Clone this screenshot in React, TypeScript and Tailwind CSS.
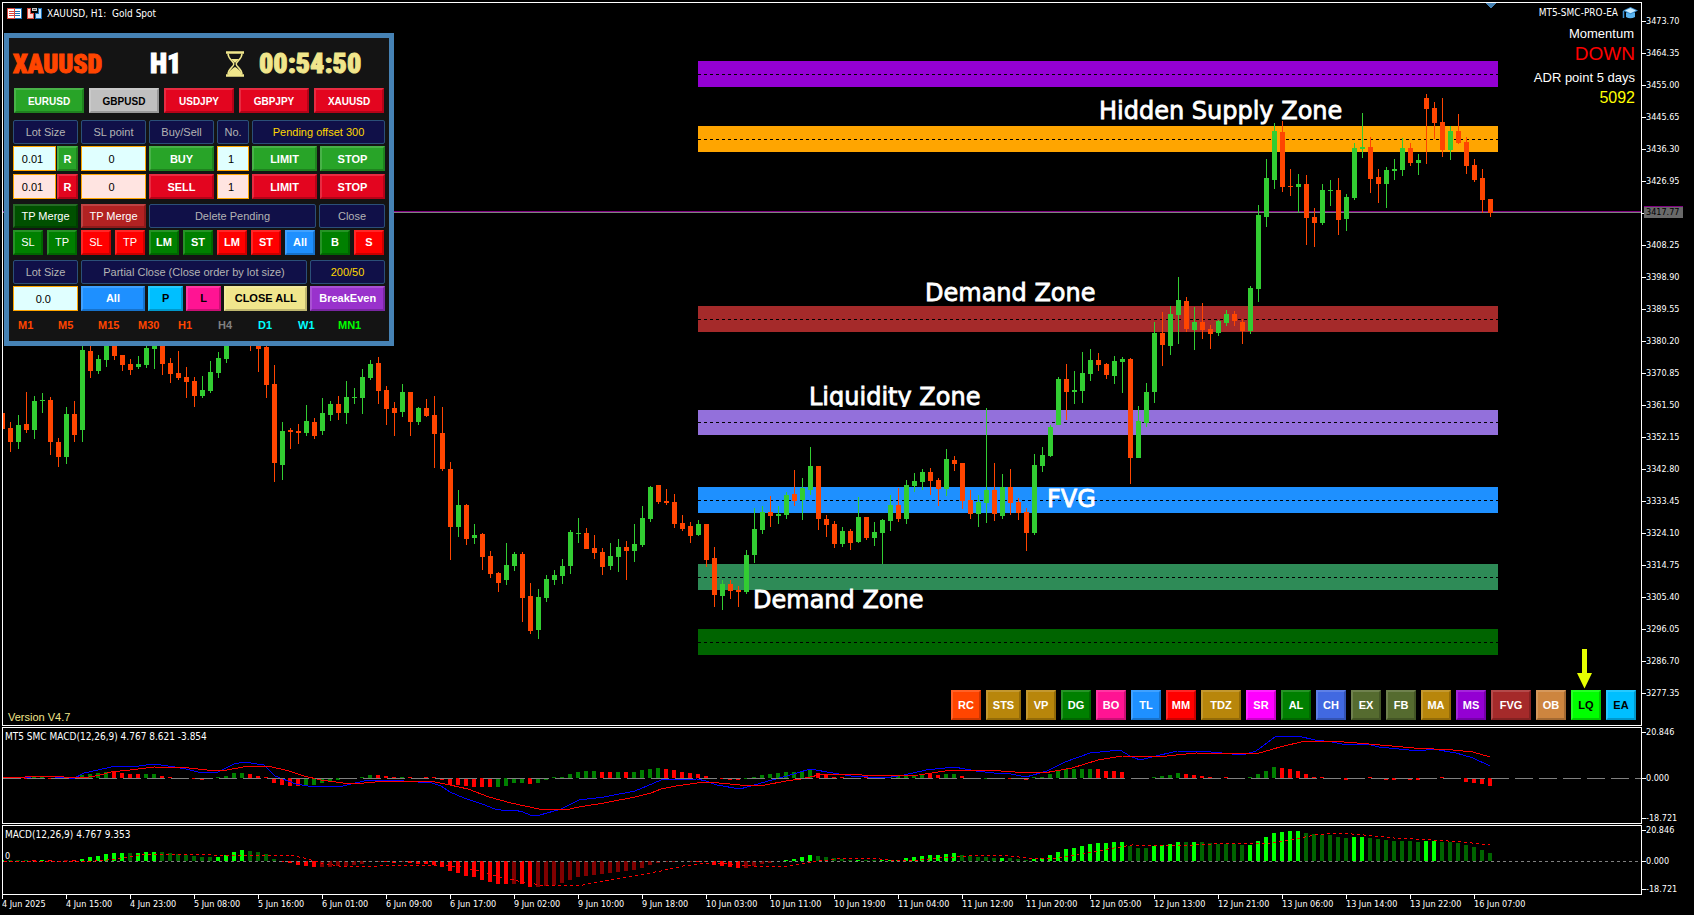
import { ReactNode } from "react";

// one candle per 8px column: [high, body top, body bottom, low, up?]
type Candle = [number, number, number, number, 0 | 1];

const CANDLES: Candle[] = [
  [413, 413, 429, 429, 0], [422, 428, 442, 452, 0], [415, 425, 442, 449, 1], [392, 424, 430, 433, 0],
  [396, 401, 430, 439, 1], [393, 400, 401, 413, 1], [397, 400, 442, 455, 0], [438, 442, 457, 467, 0],
  [407, 414, 457, 464, 1], [401, 414, 435, 442, 0], [340, 350, 430, 442, 1], [340, 351, 371, 378, 0],
  [355, 359, 371, 374, 1], [340, 340, 360, 367, 1], [340, 340, 356, 360, 0], [355, 355, 365, 371, 0],
  [359, 364, 370, 375, 0], [356, 364, 367, 369, 1], [345, 348, 365, 368, 1], [340, 340, 349, 369, 1],
  [340, 340, 364, 375, 0], [358, 363, 374, 383, 0], [351, 373, 378, 380, 0], [367, 377, 382, 398, 0],
  [377, 381, 396, 407, 0], [376, 390, 396, 398, 1], [361, 372, 391, 393, 1], [352, 358, 373, 378, 1],
  [340, 340, 359, 363, 1], [330, 332, 338, 340, 1], [330, 334, 340, 342, 0], [330, 334, 340, 351, 0],
  [340, 340, 349, 372, 0], [340, 347, 385, 398, 0], [365, 384, 463, 482, 0], [422, 431, 465, 480, 1],
  [428, 430, 432, 449, 0], [424, 431, 433, 444, 0], [405, 421, 433, 436, 1], [418, 422, 436, 439, 0],
  [398, 413, 431, 435, 1], [401, 404, 415, 421, 1], [396, 404, 413, 420, 0], [381, 397, 413, 424, 1],
  [388, 397, 398, 404, 1], [369, 377, 398, 414, 1], [360, 364, 378, 380, 1], [357, 363, 391, 404, 0],
  [386, 390, 409, 425, 0], [402, 408, 413, 436, 0], [384, 392, 412, 417, 1], [392, 392, 422, 436, 0],
  [407, 408, 422, 425, 1], [399, 408, 416, 417, 0], [396, 415, 434, 468, 0], [407, 433, 469, 471, 0],
  [462, 469, 527, 560, 0], [490, 505, 527, 537, 1], [504, 505, 539, 545, 0], [524, 535, 538, 544, 1],
  [533, 534, 557, 570, 0], [551, 556, 574, 578, 0], [572, 573, 583, 592, 0], [543, 565, 580, 585, 1],
  [552, 554, 566, 571, 1], [552, 554, 598, 622, 0], [583, 596, 631, 634, 0], [589, 597, 630, 639, 1],
  [575, 579, 598, 602, 1], [570, 575, 580, 585, 1], [559, 566, 576, 584, 1], [530, 532, 566, 574, 1],
  [518, 533, 534, 543, 1], [528, 533, 549, 549, 0], [535, 548, 553, 559, 0], [548, 552, 567, 575, 0],
  [543, 556, 566, 570, 1], [539, 547, 557, 572, 1], [541, 547, 551, 580, 0], [524, 544, 551, 562, 1],
  [506, 518, 545, 547, 1], [486, 487, 519, 522, 1], [485, 485, 502, 504, 0], [489, 501, 503, 505, 0],
  [494, 502, 524, 528, 0], [515, 523, 529, 531, 0], [522, 526, 536, 543, 0], [520, 524, 535, 536, 1],
  [524, 524, 560, 567, 0], [547, 558, 595, 607, 0], [580, 584, 596, 610, 1], [580, 584, 591, 599, 0],
  [586, 590, 592, 607, 0], [550, 555, 592, 594, 1], [508, 529, 555, 563, 1], [506, 512, 530, 534, 1],
  [496, 512, 516, 527, 0], [506, 514, 516, 524, 1], [492, 495, 515, 519, 1], [470, 494, 501, 506, 0],
  [478, 488, 500, 520, 1], [447, 466, 490, 495, 1], [466, 466, 519, 530, 0], [515, 519, 525, 537, 0],
  [521, 524, 544, 548, 0], [527, 531, 544, 547, 1], [529, 531, 543, 550, 0], [497, 517, 542, 543, 1],
  [517, 517, 538, 540, 0], [522, 532, 538, 546, 1], [519, 520, 533, 564, 1], [495, 505, 521, 531, 1],
  [488, 505, 519, 522, 0], [480, 485, 519, 524, 1], [473, 481, 486, 492, 1], [469, 472, 482, 490, 1],
  [468, 472, 481, 495, 0], [478, 480, 489, 506, 0], [449, 459, 489, 496, 1], [456, 460, 464, 471, 0],
  [463, 463, 501, 509, 0], [490, 500, 514, 519, 0], [495, 502, 514, 527, 1], [408, 490, 503, 523, 1],
  [463, 490, 514, 521, 0], [474, 487, 516, 519, 1], [469, 487, 503, 515, 0], [498, 502, 513, 520, 0],
  [508, 512, 533, 551, 0], [454, 465, 533, 535, 1], [447, 455, 466, 472, 1], [425, 427, 456, 457, 1],
  [377, 379, 425, 425, 1], [364, 379, 392, 420, 0], [371, 390, 392, 404, 1], [352, 373, 391, 403, 1],
  [349, 360, 374, 381, 1], [353, 360, 365, 371, 0], [363, 364, 375, 379, 0], [356, 361, 376, 384, 1],
  [357, 359, 362, 393, 1], [358, 359, 458, 484, 0], [406, 421, 458, 458, 1], [383, 392, 423, 427, 1],
  [322, 333, 392, 403, 1], [312, 333, 345, 366, 0], [306, 314, 346, 355, 1], [277, 300, 315, 344, 1],
  [297, 301, 329, 332, 0], [307, 322, 330, 350, 1], [303, 322, 330, 339, 0], [325, 329, 334, 349, 0],
  [320, 321, 333, 336, 1], [310, 314, 323, 326, 1], [311, 314, 321, 326, 0], [319, 322, 331, 344, 0],
  [286, 288, 331, 334, 1], [205, 215, 289, 302, 1], [159, 178, 217, 227, 1], [123, 131, 180, 189, 1],
  [121, 132, 187, 192, 0], [169, 186, 187, 196, 0], [174, 184, 187, 213, 1], [175, 184, 218, 245, 0],
  [208, 217, 223, 247, 0], [184, 190, 223, 225, 1], [180, 190, 191, 206, 1], [178, 190, 220, 235, 0],
  [194, 197, 219, 231, 1], [143, 148, 198, 200, 1], [113, 147, 149, 158, 1], [137, 147, 179, 193, 0],
  [169, 177, 184, 203, 0], [167, 170, 184, 208, 1], [159, 169, 171, 180, 1], [138, 148, 170, 176, 1],
  [143, 148, 163, 166, 0], [154, 160, 163, 175, 1], [94, 98, 109, 164, 0], [102, 108, 123, 139, 0],
  [98, 122, 150, 157, 0], [126, 131, 150, 160, 1], [114, 131, 143, 144, 0], [137, 142, 166, 174, 0],
  [159, 165, 180, 182, 0], [169, 178, 200, 213, 0], [199, 199, 213, 217, 0],
];

const ZONES = [
  { y: 61, h: 26, mid: 74, color: "#9400d3" },
  { y: 126, h: 26, mid: 139, color: "#ffa500" },
  { y: 306, h: 26, mid: 319, color: "#a52a2a" },
  { y: 410, h: 25, mid: 422, color: "#9370db" },
  { y: 487, h: 26, mid: 500, color: "#1e90ff" },
  { y: 564, h: 26, mid: 577, color: "#2e8b57" },
  { y: 629, h: 26, mid: 642, color: "#006400" },
];

const ZONE_LABELS = [
  { x: 1099, y: 119, text: "Hidden Supply Zone" },
  { x: 925, y: 301, text: "Demand Zone" },
  { x: 809, y: 405, text: "Liquidity Zone" },
  { x: 1047, y: 507, text: "FVG" },
  { x: 753, y: 608, text: "Demand Zone" },
];

// histogram bars: signed height plus colour key, one per column
const HIST =
  "1r 1g -1r -1r 1g 1g -1r -1r -1r -1r 3g 4g 5g 6g 6r 5r 4r 4r 4g 4g 2r 1r 0g 0g -1r -2r -1g 1g 2g 5g 5g 4r 2r 1r -5r -7r -8r -8r -7g -7g -5g -3g -2g -1g 0g 1g 3g 3r 2r 1r 1g 1r 0g 1r 1r -2r -7r -7r -8r -9r -9r -9r -9g -8g -5g -5g -6r -5g -2g 1g 1g 4g 6g 7g 7g 6r 6r 6g 6r 6g 8g 9g 10g 9r 8r 6r 5r 4r 2r 0g -1r -2r -2r -1g 1g 3g 4g 5g 6g 6g 7g 8g 5r 4r 1r 1r 0g 0g 1r 0g 1r 1g 2g 3g 3g 4g 5r 3r 4g 4g 2r 0g 0g -1g -1r 0g -1r -1r -2r 1g 1g 4g 7g 9g 9g 9g 9g 9r 7r 7r 6r 0r -1r -1g 1g 2g 3g 5g 4r 3r 2r 1r 0g 1r 0g 0g 1g 4g 7g 11g 10r 9r 7r 4r 1r 1r 0g -1r -2r 0g 0g 1r -1r -2r -2r -1g -2r -2r 0g 0g 1r -1r -1r -4r -5r -6r -8r";

const MACD_BARS =
  "1l 1d 1d 1d 1r 1l 1r 0d 1m 1r 2l 4l 5l 7l 8l 8l 8d 8l 9l 9l 9d 8d 7d 6d 5d 4d 4d 4l 6l 9l 11l 10d 9d 7d 2d -1r -2r -4r -5r -6r -6m -6m -5m -5m -4m -3m -1m -1m -1r -2r -1m -2r -3r -3r -4r -6r -10r -12r -15r -16r -19r -21r -23r -23r -23m -23r -26r -26m -25m -24m -22m -19m -16m -15m -14m -13m -12m -11m -10m -9m -7m -4m -2m -1m -1m 0m -1m -1r -1r -4r -5r -6r -7r -7m -5m -3m -2m 0m 1l 2l 4l 6l 5d 4d 3d 2d 1d 1l 1d 1d 1l 1l 1l 3l 4l 5l 6l 6l 7l 8l 6d 5d 4d 4d 3d 3l 3d 2d 1d 2l 3l 6l 9l 12l 13l 15l 17l 18l 18l 19l 19l 15d 13d 13d 15l 16l 17l 19l 19d 19l 19d 18d 17d 17d 17d 16d 16l 20l 24l 28l 29l 30l 30l 28d 27d 26d 26d 24d 23d 24l 24l 23d 22d 21d 20d 20d 20d 19d 20l 20l 19d 19d 18d 16d 14d 11d 8d";

const BAR_COLORS: Record<string, string> = {
  r: "#ff0000",
  g: "#008000",
  l: "#00ff00",
  d: "#006400",
  m: "#800000",
};

const MACD_LINE =
  "3,777 21,778 41,776 55,777 73,779 84,773 98,770 111,767 139,766 154,764 175,767 186,769 198,772 218,772 234,764 244,762 264,765 275,776 296,784 314,787 343,786 364,781 379,780 404,781 432,783 441,786 450,792 464,798 482,804 495,809 507,811 514,810 523,812 530,815 540,815 561,809 579,800 604,797 635,791 647,786 661,780 697,779 706,781 717,785 740,789 754,785 772,780 794,774 810,769 833,773 851,776 885,778 904,775 926,770 954,767 976,771 994,773 1011,774 1026,777 1047,771 1065,762 1090,753 1120,750 1130,756 1140,760 1152,757 1177,751 1211,752 1243,755 1256,751 1275,737 1298,736 1315,740 1332,742 1347,745 1367,744 1379,747 1419,751 1433,749 1456,753 1473,758 1490,766";

const SIGNAL_LINE =
  "3,777 25,777 43,776 84,778 100,775 111,772 130,770 154,767 189,768 207,770 227,770 243,767 268,766 289,771 304,776 321,780 343,783 364,783 386,781 430,781 450,785 468,789 489,797 511,803 539,809 565,810 579,807 604,803 635,797 651,793 661,789 676,786 704,782 719,783 740,785 765,785 786,781 801,779 819,775 840,774 883,776 919,775 951,770 986,770 1015,772 1044,773 1072,768 1098,760 1122,756 1157,757 1196,753 1256,754 1280,747 1305,741 1332,741 1369,744 1414,748 1453,750 1473,752 1490,757";

const SIGNAL_DOTS =
  "4,861 36,861 95,861 107,860 123,858 141,855 161,854 193,854 214,855 250,855 289,855 304,858 321,863 339,866 361,867 393,865 443,865 461,867 479,871 500,877 518,881 540,885 561,886 583,885 604,881 633,876 661,871 683,866 708,863 729,864 754,866 790,866 811,862 836,859 869,858 890,860 919,860 940,858 983,855 1011,856 1036,859 1058,858 1083,854 1108,849 1132,845 1177,846 1231,843 1270,843 1295,839 1315,835 1340,833 1364,835 1394,838 1433,840 1463,842 1490,845";

const PRICES = [
  "3473.70", "3464.35", "3455.00", "3445.65", "3436.30", "3426.95", "3417.77", "3408.25", "3398.90", "3389.55", "3380.20",
  "3370.85", "3361.50", "3352.15", "3342.80", "3333.45", "3324.10", "3314.75", "3305.40", "3296.05", "3286.70", "3277.35",
];
const CURRENT_PRICE = "3417.77";

const TIMES = [
  "4 Jun 2025", "4 Jun 15:00", "4 Jun 23:00", "5 Jun 08:00", "5 Jun 16:00", "6 Jun 01:00", "6 Jun 09:00", "6 Jun 17:00",
  "9 Jun 02:00", "9 Jun 10:00", "9 Jun 18:00", "10 Jun 03:00", "10 Jun 11:00", "10 Jun 19:00", "11 Jun 04:00", "11 Jun 12:00",
  "11 Jun 20:00", "12 Jun 05:00", "12 Jun 13:00", "12 Jun 21:00", "13 Jun 06:00", "13 Jun 14:00", "13 Jun 22:00", "16 Jun 07:00",
];

const TOOLS = [
  { name: "RC", cls: "w-[30px] bg-[#ff4500] text-white" },
  { name: "STS", cls: "w-[35px] bg-[#b8860b] text-white" },
  { name: "VP", cls: "w-[30px] bg-[#b8860b] text-white" },
  { name: "DG", cls: "w-[30px] bg-[#008000] text-white" },
  { name: "BO", cls: "w-[30px] bg-[#ff1493] text-white" },
  { name: "TL", cls: "w-[30px] bg-[#1e90ff] text-white" },
  { name: "MM", cls: "w-[30px] bg-[#ff0000] text-white" },
  { name: "TDZ", cls: "w-[40px] bg-[#b8860b] text-white" },
  { name: "SR", cls: "w-[30px] bg-[#ff00ff] text-white" },
  { name: "AL", cls: "w-[30px] bg-[#008000] text-white" },
  { name: "CH", cls: "w-[30px] bg-[#4169e1] text-white" },
  { name: "EX", cls: "w-[30px] bg-[#556b2f] text-white" },
  { name: "FB", cls: "w-[30px] bg-[#556b2f] text-white" },
  { name: "MA", cls: "w-[30px] bg-[#b8860b] text-white" },
  { name: "MS", cls: "w-[30px] bg-[#9400d3] text-white" },
  { name: "FVG", cls: "w-[40px] bg-[#a52a2a] text-white" },
  { name: "OB", cls: "w-[30px] bg-[#cd853f] text-white" },
  { name: "LQ", cls: "w-[30px] bg-[#00ff00] text-black" },
  { name: "EA", cls: "w-[30px] bg-[#00bfff] text-black" },
];

const TIMEFRAMES = [
  { name: "M1", cls: "text-[#ff4500]" },
  { name: "M5", cls: "text-[#ff4500]" },
  { name: "M15", cls: "text-[#ff4500]" },
  { name: "M30", cls: "text-[#ff4500]" },
  { name: "H1", cls: "text-[#ff4500]" },
  { name: "H4", cls: "text-[#808080]" },
  { name: "D1", cls: "text-[#00ffff]" },
  { name: "W1", cls: "text-[#00ffff]" },
  { name: "MN1", cls: "text-[#00ff00]" },
];

const GREEN = "bg-[#28a428] text-white";
const RED = "bg-[#e3051f] text-white";

function Btn({ children, className = "", label }: { children: ReactNode; className?: string; label?: string }) {
  return (
    <button
      aria-label={label}
      className={`flex items-center justify-center whitespace-nowrap border-2 border-t-white/15 border-l-white/15 border-r-black/20 border-b-black/20 leading-none ${className}`}
    >
      {children}
    </button>
  );
}

function Caption({ children, className = "" }: { children: ReactNode; className?: string }) {
  return (
    <div
      className={`flex h-6 items-center justify-center whitespace-nowrap rounded-[2px] border border-[#2b4f78] bg-[#101048] leading-none ${className}`}
    >
      {children}
    </div>
  );
}

function Field({ label, value, className = "" }: { label: string; value: string; className?: string }) {
  return (
    <input
      aria-label={label}
      defaultValue={value}
      className={`min-w-0 border border-[#ffa500] pr-1 text-center font-normal leading-none text-black outline-none ${className}`}
    />
  );
}

function Bars({ data, zero }: { data: string; zero: number }) {
  return (
    <g>
      {data.split(" ").map((item, i) => {
        const value = parseInt(item, 10);
        const h = Math.abs(value);
        return (
          <rect key={i} x={i * 8} y={value > 0 ? zero - h : zero} width={4} height={h} fill={BAR_COLORS[item.slice(-1)]} />
        );
      })}
    </g>
  );
}

function MainChart() {
  return (
    <svg
      className="absolute inset-0 h-full w-full"
      viewBox="3 3 1638 722"
      preserveAspectRatio="xMidYMid slice"
      shapeRendering="crispEdges"
    >
      {ZONES.map((z) => (
        <g key={z.y}>
          <rect x={698} y={z.y} width={800} height={z.h} fill={z.color} />
          <line x1={698} x2={1498} y1={z.mid + 0.5} y2={z.mid + 0.5} stroke="#000" strokeDasharray="3 3" />
        </g>
      ))}
      <rect x={3} y={211} width={1638} height={1} fill="#800080" />
      <rect x={3} y={212} width={1638} height={1} fill="#808080" />
      {CANDLES.map(([high, top, bottom, low, up], i) => (
        <g key={i} fill={up ? "#32cd32" : "#ff4500"}>
          <rect x={i * 8 + 2} y={high} width={1} height={low - high} />
          <rect x={i * 8} y={top} width={5} height={bottom - top} />
        </g>
      ))}
      <path d="M1485 3h11l-5.500 5.500z" fill="#4682b4" />
      <clipPath id="liquidity">
        <rect x={800} y={380} width={200} height={27} />
      </clipPath>
      {ZONE_LABELS.map((l) => (
        <g key={l.y} clipPath={l.text.startsWith("Liq") ? "url(#liquidity)" : undefined}>
          <text
            x={l.x}
            y={l.y}
            fill="#fff"
            stroke="#fff"
            strokeWidth={0.8}
            fontSize={24}
            fontFamily='"DejaVu Sans", sans-serif'
          >
            {l.text}
          </text>
        </g>
      ))}
      <path d="M1582 649h5v24h5l-7.500 15.500l-7.500-15.500h5z" fill="#e6ff00" shapeRendering="auto" />
    </svg>
  );
}

function Hourglass() {
  return (
    <svg className="h-[26px] w-5" viewBox="0 0 20 26" fill="none">
      <path d="M1 1.500h18M1 24.500h18" stroke="#f0e68c" strokeWidth="2.600" />
      <path d="M3 2.500c0 6 5.800 7.500 5.800 10.500S3 17.500 3 23.500M17 2.500c0 6-5.800 7.500-5.800 10.500S17 17.500 17 23.500" stroke="#f0e68c" strokeWidth="1.500" />
      <path d="M6 8h8l-4 4zM3.500 24c0-4 4-6.500 6.500-8c2.500 1.500 6.500 4 6.500 8z" fill="#f0e68c" />
    </svg>
  );
}

function TradePanel() {
  return (
    <section
      aria-label="Trade panel"
      className="absolute left-px top-[30px] w-[390px] border-[5px] border-[#4682b4] bg-[#141414] px-1 font-[Arial,'Liberation_Sans',sans-serif] text-[11px] text-[#b4b4b4]"
    >
      <header className="flex h-[50px] items-center pt-[2px] font-[Impact,'Roboto_Condensed','Liberation_Sans_Narrow',sans-serif] text-[28px] leading-none font-black [-webkit-text-stroke:1px_currentColor]">
        <h1 className="w-[137px] text-[26px] text-[#ff4500]">XAUUSD</h1>
        <span className="w-[75px] text-white">H1</span>
        <Hourglass />
        <time className="ml-[14px] text-[#f0e68c]">00:54:50</time>
      </header>
      <div className="flex h-[25px] gap-[5px] pl-px text-[10px] font-bold">
        <Btn className={`w-[70px] pt-[2px] ${GREEN}`}>EURUSD</Btn>
        <Btn className="w-[70px] bg-[#c0c0c0] pt-[2px] text-black">GBPUSD</Btn>
        <Btn className={`w-[70px] pt-[2px] ${RED}`}>USDJPY</Btn>
        <Btn className={`w-[70px] pt-[2px] ${RED}`}>GBPJPY</Btn>
        <Btn className={`w-[70px] pt-[2px] ${RED}`}>XAUUSD</Btn>
      </div>
      <div className="mt-[7px] flex gap-[3px]">
        <Caption className="w-[65px]">Lot Size</Caption>
        <Caption className="w-[65px]">SL point</Caption>
        <Caption className="w-[65px]">Buy/Sell</Caption>
        <Caption className="w-8">No.</Caption>
        <Caption className="w-[133px] text-[#ffd700]">Pending offset 300</Caption>
      </div>
      <div className="mt-[2px] flex h-[25px] gap-[3px] font-bold">
        <div className="flex w-[65px] gap-px">
          <Field label="Buy lot size" value="0.01" className="w-[43px] bg-[#e0ffff]" />
          <Btn className={`w-[21px] pt-[2px] ${GREEN}`} label="Reset buy lot">R</Btn>
        </div>
        <Field label="Buy SL point" value="0" className="w-[65px] bg-[#e0ffff]" />
        <Btn className={`w-[65px] pt-[2px] ${GREEN}`}>BUY</Btn>
        <Field label="Buy orders" value="1" className="w-8 bg-[#e0ffff]" />
        <Btn className={`w-[65px] pt-[2px] ${GREEN}`}>LIMIT</Btn>
        <Btn className={`w-[65px] pt-[2px] ${GREEN}`}>STOP</Btn>
      </div>
      <div className="mt-[3px] flex h-[25px] gap-[3px] font-bold">
        <div className="flex w-[65px] gap-px">
          <Field label="Sell lot size" value="0.01" className="w-[43px] bg-[#ffe4e1]" />
          <Btn className={`w-[21px] pt-[2px] ${RED}`} label="Reset sell lot">R</Btn>
        </div>
        <Field label="Sell SL point" value="0" className="w-[65px] bg-[#ffe4e1]" />
        <Btn className={`w-[65px] pt-[2px] ${RED}`}>SELL</Btn>
        <Field label="Sell orders" value="1" className="w-8 bg-[#ffe4e1]" />
        <Btn className={`w-[65px] pt-[2px] ${RED}`}>LIMIT</Btn>
        <Btn className={`w-[65px] pt-[2px] ${RED}`}>STOP</Btn>
      </div>
      <div className="mt-[5px] flex h-6 gap-[3px]">
        <Btn className="w-[65px] bg-[#005000] text-white">TP Merge</Btn>
        <Btn className="w-[65px] bg-[#b22222] text-white">TP Merge</Btn>
        <Caption className="w-[167px]">Delete Pending</Caption>
        <Caption className="w-[66px]">Close</Caption>
      </div>
      <div className="mt-[2px] flex h-[25px] gap-1 text-white">
        <Btn className="w-[30px] bg-[#008000]">SL</Btn>
        <Btn className="w-[30px] bg-[#008000]">TP</Btn>
        <Btn className="w-[30px] bg-[#ff0000]">SL</Btn>
        <Btn className="w-[30px] bg-[#ff0000]">TP</Btn>
        <Btn className="w-[30px] bg-[#008000] font-bold">LM</Btn>
        <Btn className="w-[30px] bg-[#008000] font-bold">ST</Btn>
        <Btn className="w-[30px] bg-[#ff0000] font-bold">LM</Btn>
        <Btn className="w-[30px] bg-[#ff0000] font-bold">ST</Btn>
        <Btn className="w-[30px] bg-[#1e90ff] font-bold">All</Btn>
        <Btn className="ml-px w-[30px] bg-[#008000] font-bold">B</Btn>
        <Btn className="w-[30px] bg-[#ff0000] font-bold">S</Btn>
      </div>
      <div className="mt-[5px] flex gap-[3px]">
        <Caption className="w-[65px]">Lot Size</Caption>
        <Caption className="w-[226px]">Partial Close (Close order by lot size)</Caption>
        <Caption className="w-[75px] text-[#ffd700]">200/50</Caption>
      </div>
      <div className="mt-[2px] flex h-[25px] gap-[3px] font-bold">
        <Field label="Close lot size" value="0.0" className="w-[65px] bg-[#e0ffff]" />
        <Btn className="w-[65px] bg-[#1e90ff] text-white">All</Btn>
        <Btn className="w-[35px] bg-[#00bfff] text-black">P</Btn>
        <Btn className="w-[35px] bg-[#ff1493] text-black">L</Btn>
        <Btn className="w-[84px] bg-[#f0e68c] text-black">CLOSE ALL</Btn>
        <Btn className="w-[75px] bg-[#9932cc] text-white">BreakEven</Btn>
      </div>
      <ul className="mb-[2px] flex h-7 items-center pl-[5px] font-bold">
        {TIMEFRAMES.map((tf) => (
          <li key={tf.name} className={`w-10 ${tf.cls}`}>
            {tf.name}
          </li>
        ))}
      </ul>
    </section>
  );
}

function Titles() {
  return (
    <div className="absolute left-1 top-0 flex h-5 items-center gap-[5px]">
      <svg className="h-[11px] w-[15px]" viewBox="0 0 15 11" shapeRendering="crispEdges">
        <path d="M0 0h8v11H0z" fill="#d9463d" />
        <path d="M8 0h7v11H8z" fill="#1c6fb5" />
        <path d="M1 1h6v9H1zM8 1h6v9H8z" fill="#fff" />
        <path d="M2 3h5v1H2zM2 5h5v1H2zM2 7h5v1H2z" fill="#d9463d" />
        <path d="M8 3h5v1H8zM8 5h5v1H8zM8 7h5v1H8z" fill="#1c6fb5" />
      </svg>
      <svg className="h-[11px] w-[15px]" viewBox="0 0 15 11" shapeRendering="crispEdges">
        <path d="M0 0h4v5h3v6H0z" fill="#d9463d" />
        <path d="M1 1h2v5h3v4H1z" fill="#ffd9d2" />
        <path d="M11 0h4v11H8V5h3z" fill="#1c6fb5" />
        <path d="M12 1h2v9H9V6h3z" fill="#bfe2ff" />
        <path d="M5 0h5v3H5z" fill="#c8c8c8" />
        <path d="M6 1h3v1H6z" fill="#555" />
      </svg>
      <span className="whitespace-pre text-[10px]">XAUUSD, H1:{"  "}Gold Spot</span>
    </div>
  );
}

function Status() {
  return (
    <div className="absolute right-[6px] top-0 flex flex-col items-end font-[Arial,'Liberation_Sans',sans-serif] text-[13px] leading-5">
      <div className="-mr-[3px] mb-px flex h-5 items-center gap-1 font-['DejaVu_Sans_Condensed','DejaVu_Sans',sans-serif] text-[10px]">
        MT5-SMC-PRO-EA
        <svg className="h-3 w-4" viewBox="0 0 16 12">
          <path d="M4 5.500v4.500c2.500 1.700 6 1.700 9 0V5.500z" fill="#5ab4f0" />
          <path d="M8.500 0L16 3.500 8.500 7.500 1 3.500z" fill="#3a8fd0" />
          <path d="M8.500 1L14 3.500 8.500 6.300 3 3.500z" fill="#c9ebff" />
          <path d="M1.500 4v7" stroke="#3a8fd0" strokeWidth="1.500" />
        </svg>
      </div>
      <p className="pr-px">Momentum</p>
      <p className="text-[19px] text-[#ff0000]">DOWN</p>
      <p className="mt-1">ADR point 5 days</p>
      <p className="text-[16px] text-[#ffff00]">5092</p>
    </div>
  );
}

function ScaleTick({ children, className = "" }: { children: ReactNode; className?: string }) {
  return (
    <span className={`flex items-center ${className}`}>
      <i className="h-px w-1 bg-white" />
      {children}
    </span>
  );
}

export default function App() {
  return (
    <main className="flex min-h-screen flex-col gap-px bg-black pl-[2px] pt-[2px] font-['DejaVu_Sans_Condensed','DejaVu_Sans',sans-serif] text-white">
      <div className="flex min-h-[724px] flex-1">
        <div className="relative flex-1 overflow-hidden border border-white">
          <MainChart />
          <Titles />
          <Status />
          <TradePanel />
          <p className="absolute bottom-0 left-[5px] font-[Arial,'Liberation_Sans',sans-serif] text-[11px] leading-4 text-[#f0e68c]">
            Version V4.7
          </p>
          <nav aria-label="Indicators" className="absolute bottom-[5px] right-[5px] flex gap-[5px] font-[Arial,'Liberation_Sans',sans-serif] text-[11px] font-bold">
            {TOOLS.map((t) => (
              <Btn key={t.name} className={`h-[30px] ${t.cls}`}>
                {t.name}
              </Btn>
            ))}
          </nav>
        </div>
        <ol className="w-[52px] pt-[3px] text-[9px] leading-none">
          {PRICES.map((p) => (
            <li key={p} className="flex h-8 items-center">
              <i className="h-px w-1 bg-white" />
              {p === CURRENT_PRICE ? (
                <span className="-ml-[2px] mb-[2px] w-[39px] border-t border-[#800080] bg-[#696969] py-px pl-[2px] text-black">{p}</span>
              ) : (
                p
              )}
            </li>
          ))}
        </ol>
      </div>

      <div className="flex h-[97px]">
        <div className="relative flex-1 overflow-hidden border border-white">
          <svg className="absolute inset-0 h-full w-full" viewBox="3 728 1638 95" preserveAspectRatio="xMidYMid slice" shapeRendering="crispEdges">
            <Bars data={HIST} zero={778} />
            <polyline points={MACD_LINE} fill="none" stroke="#0000ff" />
            <polyline points={SIGNAL_LINE} fill="none" stroke="#ff0000" />
            <line x1={3} x2={1641} y1={778.5} y2={778.5} stroke="#808080" strokeDasharray="18 6" />
          </svg>
          <p className="absolute left-[2px] top-[3px] text-[10px] leading-3">MT5 SMC MACD(12,26,9) 4.767 8.621 -3.854</p>
        </div>
        <aside className="flex w-[52px] flex-col justify-between pb-px pt-px text-[9px] leading-none">
          <ScaleTick>20.846</ScaleTick>
          <ScaleTick className="pt-[6px]">0.000</ScaleTick>
          <ScaleTick>-18.721</ScaleTick>
        </aside>
      </div>

      <div className="flex h-[70px]">
        <div className="relative flex-1 overflow-hidden border border-white">
          <svg className="absolute inset-0 h-full w-full" viewBox="3 826 1638 68" preserveAspectRatio="xMidYMid slice" shapeRendering="crispEdges">
            <Bars data={MACD_BARS} zero={861} />
            <line x1={3} x2={1641} y1={861.5} y2={861.5} stroke="#808080" strokeDasharray="3 3" />
            <polyline points={SIGNAL_DOTS} fill="none" stroke="#ff0000" strokeDasharray="3 3" />
          </svg>
          <p className="absolute left-[2px] top-[3px] text-[10px] leading-3">MACD(12,26,9) 4.767 9.353</p>
          <p className="absolute left-[2px] top-6 text-[9px] leading-3">0</p>
        </div>
        <aside className="flex w-[52px] flex-col justify-between pb-px pt-px text-[9px] leading-none">
          <ScaleTick>20.846</ScaleTick>
          <ScaleTick className="pt-[3px]">0.000</ScaleTick>
          <ScaleTick>-18.721</ScaleTick>
        </aside>
      </div>

      <ol className="-mt-px flex h-5 overflow-hidden text-[9px] leading-none">
        {TIMES.map((t) => (
          <li key={t} className="w-16 shrink-0 whitespace-nowrap">
            <i className="mb-px block h-1 w-px bg-white" />
            {t}
          </li>
        ))}
      </ol>
    </main>
  );
}
